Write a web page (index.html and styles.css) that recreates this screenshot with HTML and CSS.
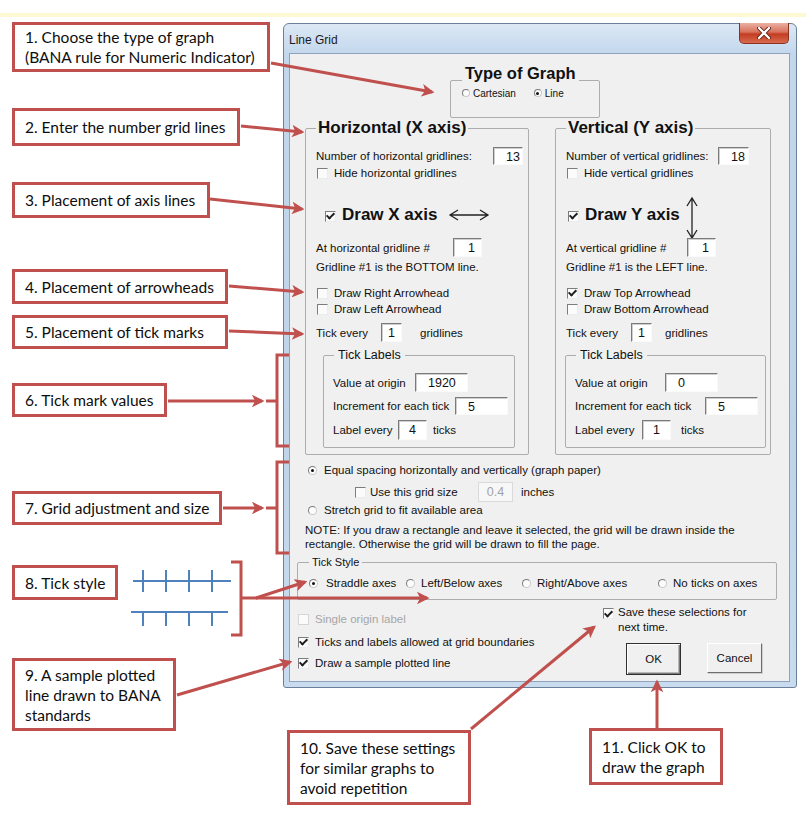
FILE: index.html
```html
<!DOCTYPE html>
<html lang="en">
<head>
    <meta charset="UTF-8">
    <meta name="viewport" content="width=device-width, initial-scale=1.0">
    <title>Line Grid - annotated</title>
    <link rel="stylesheet" href="styles.css">
</head>
<body>
    <div class="sheet">
        <div class="stripe"></div>

        <!-- callouts -->
        <div class="note n1">1. Choose the type of graph<br>(BANA rule for Numeric Indicator)</div>
        <div class="note n2">2. Enter the number grid lines</div>
        <div class="note n3">3. Placement of axis lines</div>
        <div class="note n4">4. Placement of arrowheads</div>
        <div class="note n5">5. Placement of tick marks</div>
        <div class="note n6">6. Tick mark values</div>
        <div class="note n7">7. Grid adjustment and size</div>
        <div class="note n8">8. Tick style</div>
        <div class="note n9">9. A sample plotted<br>line drawn to BANA<br>standards</div>
        <div class="note n10">10. Save these settings<br>for similar graphs to<br>avoid repetition</div>
        <div class="note n11">11. Click OK to<br>draw the graph</div>

        <div class="dialog">
            <div class="titlebar">
                <span class="title">Line Grid</span>
                <span class="close">
                    <svg width="14" height="12" viewBox="0 0 14 12">
                        <path d="M2 1 L12 11 M12 1 L2 11" stroke="#5a1a10" stroke-width="4" stroke-linecap="round"/>
                        <path d="M2 1 L12 11 M12 1 L2 11" stroke="#fff" stroke-width="2.4" stroke-linecap="round"/>
                    </svg>
                </span>
            </div>
            <div class="client">
                <fieldset class="group type-group">
                    <legend>Type of Graph</legend>
                    <div class="type-row">
                        <span class="opt"><i class="radio"></i>Cartesian</span>
                        <span class="opt"><i class="radio on"></i>Line</span>
                    </div>
                </fieldset>

                <div class="axes">
                    <fieldset class="group axis axis-x">
                        <legend>Horizontal (X axis)</legend>
                        <div class="row r-count"><span class="lab">Number of horizontal gridlines:</span><span class="box right">13</span></div>
                        <div class="row r-hide"><i class="chk"></i>Hide horizontal gridlines</div>
                        <div class="row r-draw">
                            <i class="chk on"></i><span class="draw-text">Draw X axis</span>
                            <svg class="harrow" width="42" height="14" viewBox="0 0 42 14">
                                <path d="M10 2 L2 7 L10 12 M2 7 H40 M32 2 L40 7 L32 12" fill="none" stroke="#222" stroke-width="1.3"/>
                            </svg>
                        </div>
                        <div class="row r-at"><span class="lab">At horizontal gridline #</span><span class="box right">1</span></div>
                        <div class="row r-note">Gridline #1 is the BOTTOM line.</div>
                        <div class="row r-arrow1"><i class="chk"></i>Draw Right Arrowhead</div>
                        <div class="row r-arrow2"><i class="chk"></i>Draw Left Arrowhead</div>
                        <div class="row r-tick"><span class="lab">Tick every</span><span class="box center">1</span><span class="after">gridlines</span></div>
                        <fieldset class="group labels">
                            <legend>Tick Labels</legend>
                            <div class="row r-value"><span class="lab">Value at origin</span><span class="box">1920</span></div>
                            <div class="row r-inc"><span class="lab">Increment for each tick</span><span class="box">5</span></div>
                            <div class="row r-every"><span class="lab">Label every</span><span class="box center">4</span><span class="after">ticks</span></div>
                        </fieldset>
                    </fieldset>

                    <fieldset class="group axis axis-y">
                        <legend>Vertical (Y axis)</legend>
                        <div class="row r-count"><span class="lab">Number of vertical gridlines:</span><span class="box right">18</span></div>
                        <div class="row r-hide"><i class="chk"></i>Hide vertical gridlines</div>
                        <div class="row r-draw">
                            <i class="chk on"></i><span class="draw-text">Draw Y axis</span>
                            <svg class="varrow" width="14" height="44" viewBox="0 0 14 44">
                                <path d="M2 10 L7 2 L12 10 M7 2 V42 M2 34 L7 42 L12 34" fill="none" stroke="#222" stroke-width="1.3"/>
                            </svg>
                        </div>
                        <div class="row r-at"><span class="lab">At vertical gridline #</span><span class="box right">1</span></div>
                        <div class="row r-note">Gridline #1 is the LEFT line.</div>
                        <div class="row r-arrow1"><i class="chk on"></i>Draw Top Arrowhead</div>
                        <div class="row r-arrow2"><i class="chk"></i>Draw Bottom Arrowhead</div>
                        <div class="row r-tick"><span class="lab">Tick every</span><span class="box center">1</span><span class="after">gridlines</span></div>
                        <fieldset class="group labels">
                            <legend>Tick Labels</legend>
                            <div class="row r-value"><span class="lab">Value at origin</span><span class="box">0</span></div>
                            <div class="row r-inc"><span class="lab">Increment for each tick</span><span class="box">5</span></div>
                            <div class="row r-every"><span class="lab">Label every</span><span class="box center">1</span><span class="after">ticks</span></div>
                        </fieldset>
                    </fieldset>
                </div>

                <div class="grid-opts">
                    <div class="row g-equal"><i class="radio on"></i>Equal spacing horizontally and vertically (graph paper)</div>
                    <div class="row g-size"><i class="chk"></i><span class="lab">Use this grid size</span><span class="box center off">0.4</span><span class="after">inches</span></div>
                    <div class="row g-stretch"><i class="radio"></i>Stretch grid to fit available area</div>
                    <p class="g-note">NOTE: If you draw a rectangle and leave it selected, the grid will be drawn inside the rectangle. Otherwise the grid will be drawn to fill the page.</p>
                </div>

                <fieldset class="group style-group">
                    <legend>Tick Style</legend>
                    <div class="style-row">
                        <span class="opt"><i class="radio on"></i>Straddle axes</span>
                        <span class="opt"><i class="radio"></i>Left/Below axes</span>
                        <span class="opt"><i class="radio"></i>Right/Above axes</span>
                        <span class="opt"><i class="radio"></i>No ticks on axes</span>
                    </div>
                </fieldset>

                <div class="footer">
                    <div class="footer-left">
                        <div class="row f-single disabled"><i class="chk"></i>Single origin label</div>
                        <div class="row f-ticks"><i class="chk on"></i>Ticks and labels allowed at grid boundaries</div>
                        <div class="row f-draw"><i class="chk on"></i>Draw a sample plotted line</div>
                    </div>
                    <div class="footer-right">
                        <div class="save"><i class="chk on"></i><span>Save these selections for<br>next time.</span></div>
                        <div class="buttons">
                            <span class="btn btn-default">OK</span>
                            <span class="btn">Cancel</span>
                        </div>
                    </div>
                </div>
            </div>
        </div>

        <!-- arrows, brackets and the tick style sketch -->
        <svg class="marks" width="806" height="830" viewBox="0 0 806 830">
            <defs>
                <marker id="head" viewBox="0 0 10 10" refX="8" refY="5" markerWidth="4.2" markerHeight="4.2" orient="auto">
                    <path d="M0 0 L10 5 L0 10 L2.5 5 Z" fill="#c0504d"/>
                </marker>
            </defs>
            <g stroke="#c0504d" stroke-width="3" fill="none" marker-end="url(#head)">
                <line x1="271" y1="63" x2="432" y2="92"/>
                <line x1="241" y1="126" x2="302" y2="132"/>
                <line x1="210" y1="199" x2="302" y2="209"/>
                <line x1="229" y1="286" x2="302" y2="292"/>
                <line x1="229" y1="331" x2="302" y2="334"/>
                <line x1="168" y1="401" x2="262" y2="401"/>
                <line x1="223" y1="508" x2="262" y2="508"/>
                <line x1="256" y1="598" x2="305" y2="582"/>
                <line x1="256" y1="598" x2="427" y2="598"/>
                <line x1="177" y1="695" x2="290" y2="662"/>
                <line x1="471" y1="729" x2="594" y2="627"/>
                <line x1="657" y1="728" x2="657" y2="682"/>
            </g>
            <g stroke="#c0504d" stroke-width="3" fill="none">
                <path d="M289 355 H277 V446 H289 M266 401 H277"/>
                <path d="M289 462 H277 V553 H289 M266 508 H277"/>
                <path d="M231 562 H241 V635 H231 M241 598 H257"/>
            </g>
            <g stroke="#4f81bd" stroke-width="2" fill="none">
                <path d="M133 581 H231 M143 570 V592 M166 570 V592 M189 570 V592 M212 570 V592"/>
                <path d="M131 612 H228 M143 612 V626 M166 612 V626 M189 612 V626 M212 612 V626"/>
            </g>
        </svg>
    </div>
</body>
</html>
```

FILE: styles.css
```css
* {
    box-sizing: border-box;
}

body {
    margin: 0;
    background: #ffffff;
    font-family: 'Liberation Sans', Arial, sans-serif;
    color: #111;
}

.sheet {
    position: relative;
    width: 806px;
    height: 830px;
    overflow: hidden;
}

.stripe {
    margin-top: 13px;
    height: 4px;
    background: #fcf9d4;
}

/* callout boxes */
.note {
    position: absolute;
    left: 12px;
    display: flex;
    align-items: center;
    padding: 0 10px;
    border: 3px solid #c0504d;
    background: #fff;
    font-family: Lato, 'Open Sans', sans-serif;
    font-size: 15.5px;
    line-height: 20px;
    color: #0d0d0d;
    white-space: nowrap;
}

.n1 { top: 22px; width: 258px; height: 50px; }
.n2 { top: 108px; width: 228px; height: 38px; }
.n3 { top: 182px; width: 198px; height: 36px; }
.n4 { top: 269px; width: 216px; height: 35px; }
.n5 { top: 315px; width: 216px; height: 34px; }
.n6 { top: 383px; width: 155px; height: 34px; }
.n7 { top: 491px; width: 210px; height: 34px; }
.n8 { top: 565px; width: 106px; height: 35px; }
.n9 { top: 658px; width: 164px; height: 73px; }
.n10 { left: 287px; top: 730px; width: 184px; height: 75px; }
.n11 { left: 589px; top: 728px; width: 134px; height: 57px; }

.marks {
    position: absolute;
    left: 0;
    top: 0;
    pointer-events: none;
}

/* the dialog window */
.dialog {
    position: absolute;
    left: 283px;
    top: 23px;
    width: 514px;
    height: 665px;
    display: flex;
    flex-direction: column;
    padding: 0 6px 5px 5px;
    border: 1px solid #6b7f99;
    border-radius: 6px 6px 3px 3px;
    background: linear-gradient(#dce8f5, #c3d7ec 30px, #bfd3e9 60%, #c9dbee);
    font-size: 11.5px;
}

.titlebar {
    display: flex;
    justify-content: space-between;
    align-items: flex-start;
    height: 29px;
}

.title {
    margin-top: 9px;
    font-size: 12px;
    line-height: 14px;
    color: #1b1b1b;
}

.close {
    display: flex;
    align-items: center;
    justify-content: center;
    width: 50px;
    height: 21px;
    margin-top: -1px;
    margin-right: 1px;
    border: 1px solid #8a3221;
    border-top: none;
    border-radius: 0 0 5px 5px;
    background: linear-gradient(#eab1a4, #d8735d 45%, #c43d22 55%, #d76a4f);
}

.client {
    flex: 1;
    border: 1px solid #8fa3bf;
    background: #f0f0f0;
    overflow: hidden;
}

/* group boxes */
.group {
    margin: 0;
    padding: 0;
    border: 1px solid #adadad;
    border-radius: 2px;
    min-inline-size: 0;
}

.group legend {
    padding: 0 2px;
}

.row {
    display: flex;
    align-items: center;
    white-space: nowrap;
    line-height: 14px;
}

.lab {
    flex: none;
}

.after {
    margin-left: 16px;
}

/* inputs */
.box {
    flex: none;
    height: 19px;
    padding: 0 6px 0 12px;
    border: 1px solid #fafafa;
    border-top-color: #7b7b7b;
    border-left-color: #7b7b7b;
    box-shadow: inset 1px 1px 0 #cfcfcf;
    background: #fff;
    font-size: 12.5px;
    line-height: 18px;
    color: #111;
}

.box.right {
    text-align: right;
}

.box.center {
    padding: 0;
    text-align: center;
}

.box.off {
    border-color: #dadada;
    box-shadow: none;
    background: #f7f7f7;
    color: #a3a3a3;
}

/* checkboxes and radios */
.chk {
    flex: none;
    display: grid;
    place-items: center;
    width: 11px;
    height: 11px;
    margin-right: 6px;
    border: 1px solid #ececec;
    border-top-color: #7d7d7d;
    border-left-color: #7d7d7d;
    background: #fbfbfb;
}

.chk.on::after {
    content: '';
    width: 3px;
    height: 6px;
    margin-top: -2px;
    border: solid #1e1e1e;
    border-width: 0 2px 2px 0;
    transform: rotate(45deg);
}

.radio {
    flex: none;
    display: grid;
    place-items: center;
    width: 9px;
    height: 9px;
    margin-right: 7px;
    border: 1px solid #c9c9c9;
    border-top-color: #7b7b7b;
    border-left-color: #7b7b7b;
    border-radius: 50%;
    background: #fcfcfc;
}

.radio.on::after {
    content: '';
    width: 3px;
    height: 3px;
    border-radius: 50%;
    background: #111;
}

.disabled {
    color: #a6a6a6;
}

.disabled .chk {
    border-color: #d6d6d6;
}

/* type of graph */
.type-group {
    width: 150px;
    margin: 10px 0 0 160px;
    padding: 0 4px 19px 11px;
}

.type-group legend {
    padding: 0 3px 14px;
    font-size: 16.5px;
    font-weight: bold;
    line-height: 18px;
}

.type-row {
    display: flex;
    gap: 18px;
    height: 10px;
    margin-top: -8px;
    align-items: center;
    font-size: 10px;
}

.type-row .opt {
    display: flex;
    align-items: center;
}

.type-row .radio {
    width: 8px;
    height: 8px;
    margin-right: 3px;
}

/* axis columns */
.axes {
    display: flex;
    gap: 26px;
    margin-left: 15px;
}

.axis {
    padding: 8px 4px 6px 10px;
}

.axis-x { width: 224px; }
.axis-y { width: 216px; }

.axis > legend {
    font-size: 17px;
    font-weight: bold;
    line-height: 20px;
}

.r-count { height: 20px; }
.r-count .box { width: 30px; height: 18px; }
.axis-x .r-count .lab { width: 177px; }
.axis-y .r-count .lab { width: 152px; }
.axis-y .r-count .box { width: 31px; }

.r-hide { height: 14px; padding-left: 1px; }

.r-draw {
    height: 24px;
    margin-top: 23px;
    font-size: 17px;
    font-weight: bold;
}

.axis-x .r-draw { padding-left: 9px; }
.axis-y .r-draw { padding-left: 2px; }

.r-draw .chk { margin-top: 2px; }

.harrow { margin-left: 11px; }
.varrow { margin: 5px 0 0 5px; }

.r-at { height: 19px; margin-top: 11px; }
.r-at .box { width: 29px; }
.axis-x .r-at .lab { width: 137px; }
.axis-y .r-at .lab { width: 121px; }

.r-note { height: 14px; margin-top: 3px; }
.r-arrow1 { height: 14px; margin-top: 12px; padding-left: 1px; }
.r-arrow2 { height: 14px; margin-top: 2px; padding-left: 1px; }

.r-tick { height: 19px; margin-top: 7px; }
.r-tick .lab { width: 65px; }
.r-tick .box { width: 21px; }
.axis-x .r-tick .after { margin-left: 18px; }
.axis-y .r-tick .after { margin-left: 13px; }

.labels {
    margin-top: 5px;
    padding: 10px 4px 7px 9px;
}

.axis-x .labels { width: 192px; margin-left: 7px; }
.axis-y .labels { width: 201px; margin-left: -1px; }

.labels legend {
    margin-left: 1px;
    padding: 0 4px;
    font-size: 12.5px;
    line-height: 16px;
}

.r-value { height: 19px; }
.r-value .box { width: 53px; }
.axis-x .r-value .lab { width: 82px; }
.axis-y .r-value .lab { width: 90px; }

.r-inc { height: 18px; margin-top: 5px; }
.r-inc .box { width: 53px; height: 18px; }
.axis-x .r-inc .lab { width: 122px; }
.axis-y .r-inc .lab { width: 130px; }

.r-every { height: 20px; margin-top: 5px; }
.r-every .box { width: 29px; height: 20px; }
.axis-x .r-every .lab { width: 65px; }
.axis-y .r-every .lab { width: 67px; }
.axis-x .r-every .after { margin-left: 6px; }
.axis-y .r-every .after { margin-left: 10px; }

/* grid options */
.grid-opts {
    padding-left: 18px;
}

.g-equal { height: 14px; margin-top: 8px; }

.g-size { height: 20px; margin-top: 5px; padding-left: 47px; }
.g-size .chk { margin-right: 4px; }
.g-size .lab { width: 108px; }
.g-size .box { width: 35px; height: 20px; line-height: 19px; }
.g-size .after { margin-left: 8px; }

.g-stretch { height: 14px; margin-top: 1px; }

.g-note {
    margin: 6px 8px 0 -3px;
    line-height: 14px;
}

/* tick style */
.style-group {
    width: 480px;
    margin: 4px 0 0 7px;
    padding: 7px 4px 9px 11px;
}

.style-group legend {
    padding: 0 3px;
    font-size: 11px;
    line-height: 14px;
}

.style-row {
    display: grid;
    grid-template-columns: 97px 116px 136px auto;
    height: 14px;
    align-items: center;
    white-space: nowrap;
}

.style-row .opt {
    display: flex;
    align-items: center;
}

.style-row .radio { margin-right: 6px; }
.style-row .opt:first-child .radio { margin-right: 8px; }

/* footer */
.footer {
    display: flex;
}

.footer-left {
    width: 313px;
    padding-left: 8px;
}

.f-single { height: 14px; margin-top: 12px; }
.f-ticks { height: 14px; margin-top: 9px; }
.f-draw { height: 14px; margin-top: 7px; }

.footer-right {
    padding-top: 5px;
}

.save {
    display: flex;
    align-items: flex-start;
    line-height: 15px;
}

.save .chk {
    margin: 3px 4px 0 0;
}

.buttons {
    display: flex;
    gap: 26px;
    margin: 8px 0 0 23px;
    align-items: flex-start;
}

.btn {
    display: flex;
    align-items: center;
    justify-content: center;
    width: 55px;
    height: 30px;
    border: 1px solid #6e6e6e;
    border-top-color: #fff;
    border-left-color: #fff;
    box-shadow: 1px 1px 0 #d0d0d0;
    background: #f0f0f0;
}

.btn-default {
    height: 32px;
    border: 1px solid #303030;
    box-shadow: inset 1px 1px 0 #fff, inset -1px -1px 0 #7a7a7a, inset -2px -2px 0 #b8b8b8;
}
```
